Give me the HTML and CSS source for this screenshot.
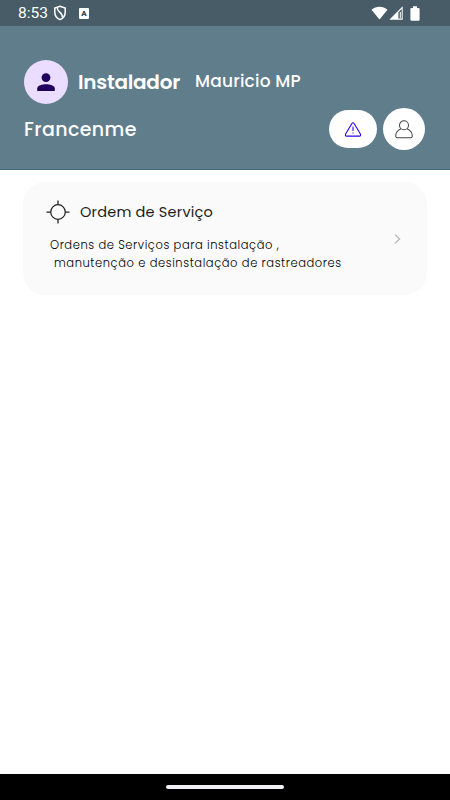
FILE: index.html
```html
<!DOCTYPE html>
<html lang="pt-BR">
  <head>
    <meta charset="UTF-8" />
    <meta name="viewport" content="width=device-width, initial-scale=1.0" />
    <title>Instalador</title>
    <link rel="stylesheet" href="styles.css">
  </head>
  <body>
    <div class="screen">
      <div class="status-bar">
        <span class="time">8:53</span>
        <svg class="shield" width="14" height="16" viewBox="0 0 14 16">
          <path d="M7 1.2 L12.2 3 V7.2 C12.2 10.7 10 13.4 7 14.6 C4 13.4 1.8 10.7 1.8 7.2 V3 Z" fill="none" stroke="#fff" stroke-width="1.5" />
          <path d="M4.4 3 C3.6 7 10 7.4 9.2 12" fill="none" stroke="#fff" stroke-width="1.5" />
        </svg>
        <span class="app-badge">A</span>
        <div class="signals">
          <svg width="17" height="14" viewBox="0 0 17 14">
            <path d="M0.5 3.7 C5 -0.3 12 -0.3 16.5 3.7 L8.5 13.6 Z" fill="#fff" />
          </svg>
          <svg width="14" height="14" viewBox="0 0 14 14">
            <path d="M0.3 13.7 L13.7 0.3 V13.7 Z" fill="#fff" />
            <path d="M9.4 6.2 L12.7 2.9 V12.6 H9.4 Z" fill="#455a64" />
            <path d="M11.3 6 V12" stroke="#fff" stroke-width="1" />
          </svg>
          <svg class="battery" width="10" height="15" viewBox="0 0 10 15">
            <path d="M3 0.3 H7 V2 H8.5 Q9.6 2 9.6 3 V13.5 Q9.6 14.7 8.5 14.7 H1.5 Q0.4 14.7 0.4 13.5 V3 Q0.4 2 1.5 2 H3 Z" fill="#fff" />
          </svg>
        </div>
      </div>

      <header class="header">
        <div class="profile">
          <div class="avatar">
            <svg width="18" height="18" viewBox="0 0 18 18" fill="#21005d">
              <circle cx="9" cy="4.6" r="4.4" />
              <path d="M0.2 18 V15.4 C0.2 12.5 5.5 11.2 9 11.2 S17.8 12.5 17.8 15.4 V18 Z" />
            </svg>
          </div>
          <h1 class="role">Instalador</h1>
          <span class="user">Mauricio MP</span>
        </div>
        <div class="company-row">
          <span class="company">Francenme</span>
          <div class="actions">
            <button class="btn-alert" aria-label="Alertas">
              <svg width="18" height="16" viewBox="0 0 18 16" fill="none" stroke="#3300f0" stroke-width="1.1" stroke-linecap="round" stroke-linejoin="round">
                <path d="M7.9 2.5 Q9 1 10.1 2.5 L16.4 13 Q17.2 15.1 15.4 15.1 H2.6 Q0.8 15.1 1.6 13 Z" />
                <path d="M9 6.1 V9.5 M9 11.9 V12" />
              </svg>
            </button>
            <button class="btn-user" aria-label="Perfil">
              <svg width="18" height="19" viewBox="0 0 18 19" fill="none" stroke="#444" stroke-width="1.05">
                <circle cx="9" cy="5.2" r="4.5" />
                <path d="M5.9 8.8 C2.7 10.2 0.7 12.9 0.7 16 Q0.7 17.8 2.3 17.8 H15.7 Q17.3 17.8 17.3 16 C17.3 12.9 15.3 10.2 12.1 8.8" />
              </svg>
            </button>
          </div>
        </div>
      </header>

      <main class="content">
        <div class="card">
          <div class="card-body">
            <div class="card-title">
              <svg width="24" height="24" viewBox="0 0 24 24" fill="none" stroke="#222" stroke-width="1.25">
                <circle cx="12" cy="12" r="7.3" />
                <path d="M12 0.5 V4.7 M12 19.3 V23.5 M0.5 12 H4.7 M19.3 12 H23.5" />
              </svg>
              <h2>Ordem de Serviço</h2>
            </div>
            <p class="line-first">Ordens de Serviços para instalação ,</p>
            <p class="line-second">manutenção e desinstalação de rastreadores</p>
          </div>
          <svg class="chevron" width="7" height="10" viewBox="0 0 7 10" fill="none" stroke="#b5b5b5" stroke-width="1.3">
            <path d="M1 0.6 L5.6 5 L1 9.4" />
          </svg>
        </div>
      </main>

      <div class="nav-bar">
        <div class="nav-handle"></div>
      </div>
    </div>
  </body>
</html>
```
FILE: styles.css
```css
* {
  margin: 0;
  padding: 0;
  box-sizing: border-box;
}

body {
  font-family: Poppins, Inter, sans-serif;
  background: #fff;
}

.screen {
  display: flex;
  flex-direction: column;
  height: 100vh;
  overflow: hidden;
}

/* Status bar */
.status-bar {
  display: flex;
  align-items: center;
  height: 26px;
  padding: 0 30px 0 18px;
  background: #475c66;
  color: #fff;
}

.time {
  width: 35px;
  font-family: Roboto, sans-serif;
  font-size: 15.5px;
  line-height: 26px;
}

.app-badge {
  width: 10px;
  height: 11px;
  margin-left: 12px;
  border-radius: 1px;
  background: #fff;
  color: #37474f;
  font-family: Roboto, sans-serif;
  font-size: 8px;
  font-weight: 900;
  line-height: 11px;
  text-align: center;
}

.signals {
  display: flex;
  align-items: center;
  margin-left: auto;
  gap: 1px;
}

.battery {
  margin-left: 6px;
}

/* Header */
.header {
  height: 144px;
  padding: 34px 25px 0 24px;
  background: #607d8b;
  border-bottom: 1px solid #456b7e;
  color: #fff;
}

.profile {
  display: flex;
  align-items: center;
  height: 44px;
}

.avatar {
  display: flex;
  align-items: center;
  justify-content: center;
  width: 44px;
  height: 44px;
  border-radius: 50%;
  background: #eaddff;
}

.role {
  width: 117px;
  margin-left: 10px;
  font-size: 20px;
  font-weight: 600;
  letter-spacing: -0.25px;
  white-space: nowrap;
}

.user {
  font-size: 17px;
  font-weight: 500;
  line-height: 24px;
  letter-spacing: 0.2px;
  padding-bottom: 2px;
}

.company-row {
  display: flex;
  align-items: center;
  justify-content: space-between;
  height: 42px;
  margin-top: 4px;
}

.company {
  font-size: 19px;
  font-weight: 500;
  letter-spacing: 0.4px;
}

.actions {
  display: flex;
  align-items: center;
  gap: 6px;
}

button {
  display: flex;
  align-items: center;
  justify-content: center;
  border: none;
  background: #fff;
  cursor: pointer;
}

.btn-alert {
  width: 48px;
  height: 38px;
  border-radius: 19px;
}

.btn-user {
  width: 42px;
  height: 42px;
  border-radius: 50%;
}

/* Service card */
.content {
  flex: 1;
  padding: 12px 23px;
}

.card {
  display: flex;
  align-items: center;
  justify-content: space-between;
  height: 113px;
  padding: 0 26px 0 23px;
  border-radius: 22px;
  background: #fafafa;
  color: #1c1c1c;
}

.card-body {
  height: 113px;
  padding-top: 18px;
}

.card-title {
  display: flex;
  align-items: center;
  height: 24px;
  margin-bottom: 13px;
  gap: 10px;
}

.card-title h2 {
  font-size: 14.5px;
  font-weight: 400;
  line-height: 22px;
  letter-spacing: 0.2px;
}

.card p {
  font-size: 11.5px;
  font-weight: 300;
  line-height: 17.5px;
  letter-spacing: 0.57px;
  color: #000;
  white-space: nowrap;
}

.line-first {
  padding-left: 4px;
}

.line-second {
  padding-left: 8px;
}

/* Bottom navigation */
.nav-bar {
  display: flex;
  align-items: center;
  justify-content: center;
  height: 26px;
  background: #000;
}

.nav-handle {
  width: 118px;
  height: 4px;
  border-radius: 2px;
  background: #f1f0f4;
}
```
